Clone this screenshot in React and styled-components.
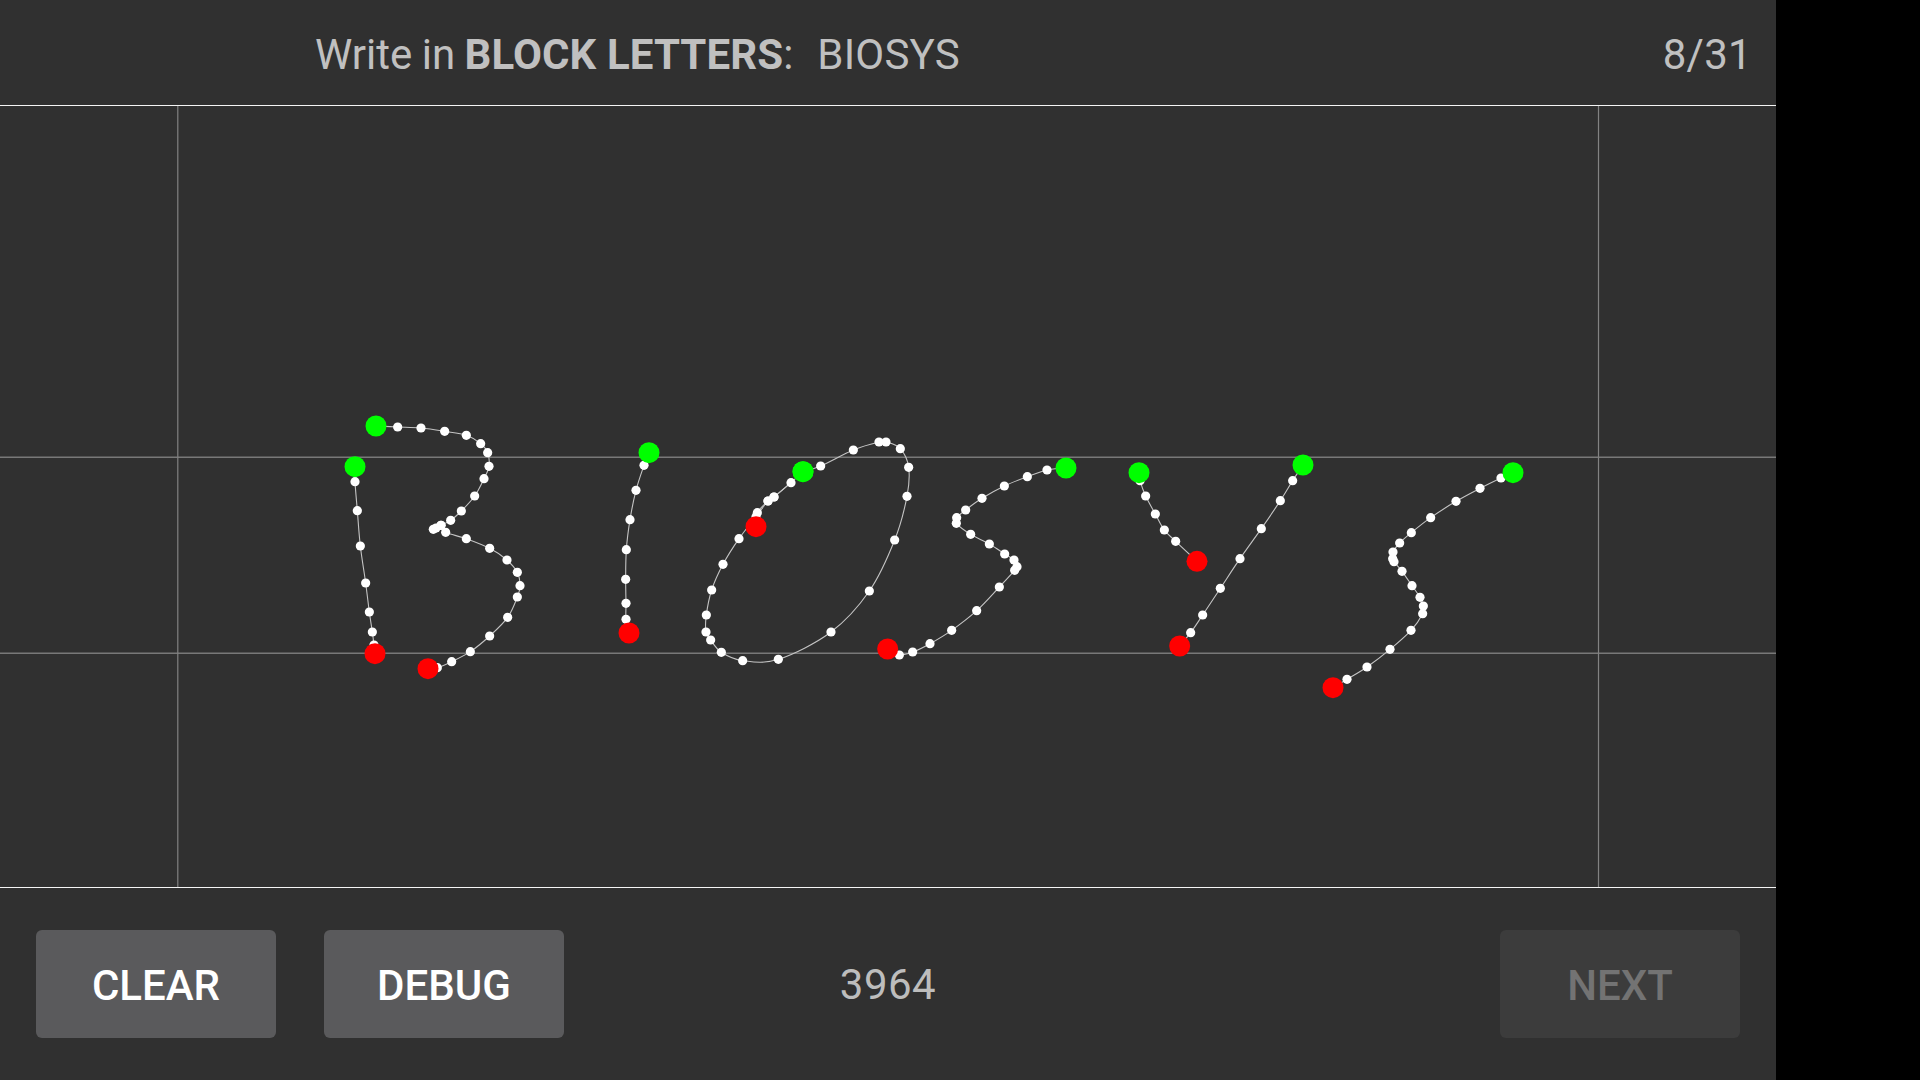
import React from "react";
import styled, { createGlobalStyle } from "styled-components";

const Global = createGlobalStyle`
  html, body { margin: 0; padding: 0; background: #000; }
  body { font-family: Roboto, "Liberation Sans", sans-serif; }
`;

const Screen = styled.div`
  width: 1920px;
  height: 1080px;
  background: #000;
  overflow: hidden;
`;

const Panel = styled.main`
  width: 1776px;
  height: 1080px;
  background: #303030;
  display: flex;
  flex-direction: column;
`;

const Header = styled.header`
  height: 105px;
  flex: none;
  box-sizing: border-box;
  padding: 4px 24px 0 315px;
  display: flex;
  align-items: center;
  font-size: 42px;
  word-spacing: -1px;
  color: #c0c0c0;
`;

const Strong = styled.b`
  word-spacing: 0;
  letter-spacing: 0.1px;
`;

const Word = styled.span`
  margin-left: 24px;
  letter-spacing: 0.2px;
`;

const Progress = styled.span`
  margin-left: auto;
  letter-spacing: 0.3px;
`;

const Canvas = styled.section`
  height: 783px;
  flex: none;
  box-sizing: border-box;
  border-top: 1px solid #f4f4f4;
  border-bottom: 1px solid #f4f4f4;
`;

const Drawing = styled.svg`
  display: block;
  width: 1776px;
  height: 781px;
`;

const Footer = styled.footer`
  flex: 1;
  box-sizing: border-box;
  padding: 42px 36px;
  display: grid;
  grid-template-columns: 1fr auto 1fr;
  align-items: start;
`;

const Actions = styled.div`
  display: flex;
  gap: 48px;
`;

const Button = styled.button`
  width: 240px;
  height: 108px;
  border: 0;
  padding: 2px 0 0;
  border-radius: 6px;
  font: 500 42px Roboto, sans-serif;
  background: ${(p) => (p.disabled ? "#3c3c3c" : "#5a5a5c")};
  color: ${(p) => (p.disabled ? "#737373" : "#fff")};
  justify-self: end;
`;

const Count = styled.div`
  height: 108px;
  font-size: 42px;
  line-height: 110px;
  letter-spacing: 0.5px;
  color: #bdbdbd;
`;

const at = (ox, oy, pts) => pts.map(([x, y]) => [ox + x / 3, oy + y / 3]);

const strokes = [
  at(300, 400, [[165,200],[165,245],[172,332],[181,438],[197,549],[208,636],[217,696],[222,735],[225,761]]),
  at(300, 400, [[228,78],[293,81],[363,84],[434,94],[499,106],[542,131],[563,158],[567,199],[552,236],[524,288],[484,333],[452,361],[423,376],[408,384],[400,388],[423,376],[437,397],[499,416],[569,445],[621,480],[652,517],[660,557],[652,591],[623,652],[569,708],[511,755],[455,785],[412,803],[384,806]]),
  at(300, 400, [[1047,158],[1032,196],[1008,271],[990,359],[979,449],[977,538],[978,610],[978,658],[987,699]]),
  at(680, 420, [[369,155],[333,188],[282,231],[264,243],[232,278],[228,320]]),
  at(680, 420, [[369,155],[422,138],[520,90],[597,66],[618,66],[661,86],[686,142],[681,229],[644,360],[568,513],[453,636],[295,718],[188,722],[124,697],[92,660],[78,636],[79,585],[95,510],[129,433],[177,356],[228,290],[264,243],[282,231],[333,188]]),
  at(680, 420, [[1158,144],[1101,150],[1042,170],[973,198],[906,235],[857,270],[830,293],[829,310],[872,343],[928,372],[974,402],[1002,420],[1011,440],[1004,451],[958,501],[890,572],[815,631],[750,671],[698,696],[658,705],[623,687]]),
  at(1100, 430, [[117,128],[120,152],[137,198],[166,252],[193,300],[227,334],[291,394]]),
  at(1100, 430, [[609,105],[578,152],[541,212],[484,296],[420,386],[361,475],[308,555],[272,608],[239,648]]),
  at(1100, 430, [[1239,128],[1203,144],[1140,175],[1068,214],[992,263],[934,308],[899,339],[879,366],[878,386],[882,395],[906,424],[936,467],[960,502],[970,528],[968,551],[933,601],[870,658],[801,711],[741,748],[699,773]]),
];

const smooth = (p) => {
  let d = `M${p[0][0]} ${p[0][1]}`;
  for (let i = 0; i < p.length - 1; i++) {
    const a = p[i - 1] || p[i];
    const b = p[i];
    const c = p[i + 1];
    const e = p[i + 2] || c;
    d += `C${b[0] + (c[0] - a[0]) / 6} ${b[1] + (c[1] - a[1]) / 6} ${c[0] - (e[0] - b[0]) / 6} ${c[1] - (e[1] - b[1]) / 6} ${c[0]} ${c[1]}`;
  }
  return d;
};

export default function App() {
  return (
    <Screen>
      <Global />
      <Panel>
        <Header>
          <span>Write in <Strong>BLOCK LETTERS</Strong>:</span>
          <Word>BIOSYS</Word>
          <Progress>8/31</Progress>
        </Header>
        <Canvas>
          <Drawing viewBox="0 106 1776 781">
            <g fill="none">
              <path d="M0 457.3H1776M0 653.2H1776" stroke="#787878" strokeWidth="1.4" />
              <path d="M177.8 105V888M1598.5 105V888" stroke="#828282" strokeWidth="1.2" />
            </g>
            {strokes.map((p, i) => (
              <path key={`l${i}`} d={smooth(p)} fill="none" stroke="#c4c4c4" strokeWidth="1.1" />
            ))}
            {strokes.map((p, i) =>
              p.slice(1, -1).map(([x, y], j) => (
                <circle key={`w${i}-${j}`} cx={x} cy={y} r="4.6" fill="#fff" />
              ))
            )}
            {strokes.map((p, i) => {
              const first = p[0];
              const last = p[p.length - 1];
              const isLoop = i === 4;
              return (
                <g key={`e${i}`}>
                  <circle cx={first[0]} cy={first[1]} r="10.5" fill="#00ff00" />
                  {!isLoop && <circle cx={last[0]} cy={last[1]} r="10.5" fill="#ff0000" />}
                </g>
              );
            })}
          </Drawing>
        </Canvas>
        <Footer>
          <Actions>
            <Button>CLEAR</Button>
            <Button>DEBUG</Button>
          </Actions>
          <Count>3964</Count>
          <Button disabled>NEXT</Button>
        </Footer>
      </Panel>
    </Screen>
  );
}
